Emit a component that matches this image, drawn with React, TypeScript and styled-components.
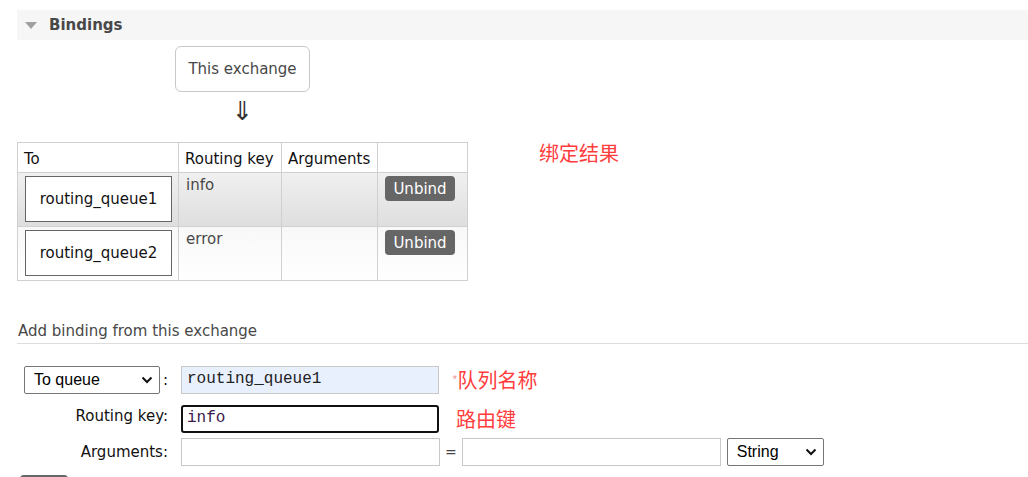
import React from "react";
import styled, { createGlobalStyle } from "styled-components";

const Global = createGlobalStyle`
  html, body { margin: 0; padding: 0; background: #fff; }
  body { font-family: "DejaVu Sans", Verdana, sans-serif; font-size: 15px; color: #484848; overflow: hidden; }
  * { box-sizing: border-box; }
`;

const Page = styled.div`
  padding: 10px 0 0 17px;
`;

const SectionHeader = styled.div`
  height: 30px;
  background: #f6f6f6;
  display: flex;
  align-items: center;
  padding-left: 8px;
  gap: 12px;
  font-weight: bold;
  font-size: 15px;
  color: #484848;
`;

const Triangle = styled.span`
  width: 0;
  height: 0;
  border-left: 6px solid transparent;
  border-right: 6px solid transparent;
  border-top: 7px solid #a0a0a0;
  margin-top: 1px;
`;

const Diagram = styled.div`
  display: flex;
  flex-direction: column;
  align-items: center;
  width: 135px;
  margin: 6px 0 0 158px;
`;

const ExchangeBox = styled.div`
  width: 135px;
  height: 46px;
  border: 1px solid #c8c8c8;
  border-radius: 6px;
  display: flex;
  align-items: center;
  justify-content: center;
  font-size: 15px;
  color: #484848;
`;

const Arrow = styled.div`
  font-size: 26px;
  line-height: 26px;
  height: 26px;
  margin-top: 6px;
  color: #333;
`;

const TableRow = styled.div`
  display: flex;
  align-items: flex-start;
  margin-top: 18px;
`;

const Table = styled.table`
  border-collapse: collapse;
  table-layout: fixed;
  width: 450px;
  font-size: 15px;
`;

const Th = styled.th<{ $w: number }>`
  width: ${(p) => p.$w}px;
  height: 30px;
  border: 1px solid #d0d0d0;
  text-align: left;
  font-weight: normal;
  white-space: nowrap;
  padding: 3px 6px 0;
  color: #111;
`;

const Tr = styled.tr<{ $alt?: boolean }>`
  background: ${(p) =>
    p.$alt
      ? "linear-gradient(#f8f8f8, #fff)"
      : "linear-gradient(#f0f0f0, #dedede)"};
`;

const Td = styled.td`
  height: 54px;
  border: 1px solid #d0d0d0;
  vertical-align: top;
  padding: 3px 7px 2px;
  color: #484848;
`;

const QueueBox = styled.div`
  width: 147px;
  height: 46px;
  border: 1px solid #666;
  background: #fff;
  display: flex;
  align-items: center;
  justify-content: center;
  color: #111;
  font-size: 15px;
`;

const Unbind = styled.button`
  font-family: "DejaVu Sans", Verdana, sans-serif;
  font-size: 15px;
  background: #666;
  color: #fff;
  border: none;
  border-radius: 4px;
  width: 70px;
  height: 25px;
  padding: 0;
`;

const Note = styled.div`
  color: #ff3d3d;
  font-family: "Noto Sans CJK SC", sans-serif;
  font-size: 20px;
  line-height: 22px;
`;

const TableNote = styled(Note)`
  margin: 0 0 0 71px;
`;

const SubHeading = styled.div`
  margin-top: 41px;
  width: 1011px;
  border-bottom: 1px solid #ddd;
  padding: 0 0 3px 1px;
  font-size: 15px;
  color: #484848;
`;

const Form = styled.div`
  display: grid;
  grid-template-columns: 151px auto;
  margin-top: 22px;
  align-items: center;
`;

const LabelCell = styled.div`
  display: flex;
  justify-content: flex-end;
  align-items: center;
  font-size: 15px;
  color: #111;
  height: 100%;
  padding-top: 5px;
`;

const FirstLabel = styled.div`
  display: flex;
  align-items: center;
  padding-left: 7px;
  gap: 3px;
  color: #111;
`;

const Select = styled.div<{ $w: number }>`
  width: ${(p) => p.$w}px;
  height: 28px;
  border: 1px solid #767676;
  border-radius: 2px;
  background: #fff;
  display: flex;
  align-items: center;
  justify-content: space-between;
  padding: 0 6px 0 9px;
  font-family: "Liberation Sans", Arial, sans-serif;
  font-size: 16px;
  color: #000;
`;

const FieldCell = styled.div<{ $mt: number }>`
  display: flex;
  align-items: center;
  margin-top: ${(p) => p.$mt}px;
  padding-left: 13px;
`;

const Input = styled.div<{ $w: number; $state?: "filled" | "focus" }>`
  width: ${(p) => p.$w}px;
  height: 28px;
  border: ${(p) => (p.$state === "focus" ? "2px solid #111" : "1px solid #c8c8c8")};
  border-radius: ${(p) => (p.$state === "focus" ? 3 : 0)}px;
  background: ${(p) => (p.$state === "filled" ? "#e8f0fe" : "#fff")};
  font-family: "Liberation Mono", "Courier New", monospace;
  font-size: 16px;
  color: ${(p) => (p.$state === "focus" ? "#3a1a4a" : "#222")};
  display: flex;
  align-items: center;
  padding-left: ${(p) => (p.$state === "focus" ? 4 : 5)}px;
  padding-bottom: 3px;
`;

const Eq = styled.span`
  margin: 0 5px 0 5px;
  font-size: 14px;
  color: #444;
`;

const Asterisk = styled.span`
  color: #f0a0a0;
  font-size: 12px;
  vertical-align: top;
`;

const FieldNote = styled(Note)<{ $ml: number }>`
  margin-left: ${(p) => p.$ml}px;
`;

const BindButton = styled.div`
  margin: 9px 0 0 3px;
  width: 48px;
  height: 26px;
  border-top: 2px solid #666;
  border-radius: 4px 4px 0 0;
`;

const Chevron = () => (
  <svg width="12" height="8" viewBox="0 0 12 8">
    <path d="M1.5 1.5 L6 6 L10.5 1.5" fill="none" stroke="#111" strokeWidth="2" />
  </svg>
);

const rows = [
  { q: "routing_queue1", key: "info" },
  { q: "routing_queue2", key: "error" },
];

export default function App() {
  return (
    <>
      <Global />
      <Page>
        <SectionHeader>
          <Triangle />
          Bindings
        </SectionHeader>
        <Diagram>
          <ExchangeBox>This exchange</ExchangeBox>
          <Arrow>⇓</Arrow>
        </Diagram>
        <TableRow>
          <Table>
            <thead>
              <tr>
                <Th $w={161}>To</Th>
                <Th $w={103}>Routing key</Th>
                <Th $w={96}>Arguments</Th>
                <Th $w={90}></Th>
              </tr>
            </thead>
            <tbody>
              {rows.map((r, i) => (
                <Tr key={r.q} $alt={i === 1}>
                  <Td>
                    <QueueBox>{r.q}</QueueBox>
                  </Td>
                  <Td>{r.key}</Td>
                  <Td></Td>
                  <Td>
                    <Unbind>Unbind</Unbind>
                  </Td>
                </Tr>
              ))}
            </tbody>
          </Table>
          <TableNote>绑定结果</TableNote>
        </TableRow>
        <SubHeading>Add binding from this exchange</SubHeading>
        <Form>
          <FirstLabel>
            <Select $w={136}>
              To queue
              <Chevron />
            </Select>
            :
          </FirstLabel>
          <FieldCell $mt={0}>
            <Input $w={258} $state="filled">routing_queue1</Input>
            <FieldNote $ml={13}>
              <Asterisk>*</Asterisk>队列名称
            </FieldNote>
          </FieldCell>
          <LabelCell>Routing key:</LabelCell>
          <FieldCell $mt={11}>
            <Input $w={258} $state="focus">info</Input>
            <FieldNote $ml={17}>路由键</FieldNote>
          </FieldCell>
          <LabelCell>Arguments:</LabelCell>
          <FieldCell $mt={5}>
            <Input $w={259} />
            <Eq>=</Eq>
            <Input $w={259} />
            <Select $w={97} style={{ marginLeft: 6 }}>
              String
              <Chevron />
            </Select>
          </FieldCell>
        </Form>
        <BindButton />
      </Page>
    </>
  );
}
